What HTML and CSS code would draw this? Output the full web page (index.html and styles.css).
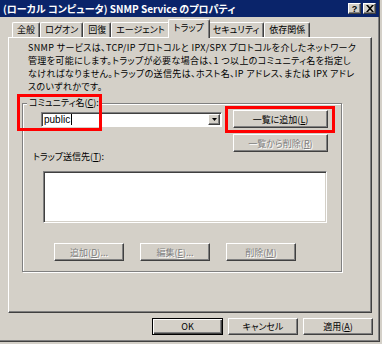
FILE: index.html
```html
<!DOCTYPE html>
<html lang="ja">
<head>
  <meta charset="UTF-8">
  <title>SNMP Service のプロパティ</title>
  <link rel="stylesheet" href="styles.css">
</head>
<body>

  <div class="window">
    <div class="titlebar">
      <span class="title">(ローカル コンピュータ) SNMP Service のプロパティ</span>
      <div class="title-buttons">
        <span class="tbtn">?</span>
        <span class="tbtn">
          <svg width="8" height="7" viewBox="0 0 8 7"><path d="M0 0h2l2 2.2L6 0h2L5 3.5 8 7H6L4 4.8 2 7H0l3-3.5z"/></svg>
        </span>
      </div>
    </div>

    <div class="tabs">
      <div class="tab">全般</div>
      <div class="tab">ログオン</div>
      <div class="tab">回復</div>
      <div class="tab">エージェント</div>
      <div class="tab active">トラップ</div>
      <div class="tab">セキュリティ</div>
      <div class="tab">依存関係</div>
    </div>

    <div class="panel">
      <p class="desc">
        SNMP サービスは、TCP/IP プロトコルと IPX/SPX プロトコルを介したネットワーク<br>
        管理を可能にします。トラップが必要な場合は、1 つ以上のコミュニティ名を指定し<br>
        なければなりません。トラップの送信先は、ホスト名、IP アドレス、または IPX アドレ<br>
        スのいずれかです。
      </p>

      <fieldset class="group">
        <legend>コミュニティ名(<u>C</u>):</legend>

        <div class="community-row">
          <div class="combo">
            <span class="combo-text">public</span><span class="caret"></span>
            <span class="combo-arrow">
              <svg width="5" height="3" viewBox="0 0 5 3"><path d="M0 0h5L2.5 3z"/></svg>
            </span>
          </div>
          <div class="side-buttons">
            <button class="btn">一覧に追加(<u>L</u>)</button>
            <button class="btn" disabled>一覧から削除(<u>R</u>)</button>
          </div>
        </div>

        <div class="field-label">トラップ送信先(<u>T</u>):</div>
        <div class="listbox"></div>

        <div class="btn-row">
          <button class="btn" disabled>追加(<u>D</u>)...</button>
          <button class="btn" disabled>編集(<u>E</u>)...</button>
          <button class="btn" disabled>削除(<u>M</u>)</button>
        </div>
      </fieldset>
    </div>

    <div class="footer">
      <button class="btn default">OK</button>
      <button class="btn">キャンセル</button>
      <button class="btn">適用(<u>A</u>)</button>
    </div>

    <!-- 注目枠 -->
    <div class="highlight hl-community"></div>
    <div class="highlight hl-add"></div>
  </div>

</body>
</html>
```

FILE: styles.css
```css
* {
  box-sizing: border-box;
}

body {
  margin: 0;
  background-color: #d4d0c8;
  font-family: "Noto Sans CJK JP", "Noto Sans", sans-serif;
  font-size: 9px;
  font-feature-settings: "palt" 1;
  color: #000;
}

.window {
  position: relative;
  width: 380px;
  height: 342px;
  background-color: #d4d0c8;
  box-shadow: inset -1px -1px #404040, inset -2px -2px #808080;
}

/* タイトルバー */
.titlebar {
  display: flex;
  align-items: center;
  justify-content: space-between;
  height: 17px;
  margin-right: 1px;
  padding: 0 3px 0 3px;
  background-color: #0a246a;
  color: #fff;
}

.title {
  font-size: 10px;
  font-weight: bold;
  white-space: nowrap;
}

.title-buttons {
  display: flex;
  gap: 2px;
}

.tbtn {
  display: flex;
  align-items: center;
  justify-content: center;
  width: 13px;
  height: 11px;
  background-color: #d4d0c8;
  color: #000;
  font-family: "Liberation Sans", sans-serif;
  font-size: 9px;
  font-weight: bold;
  border: 1px solid;
  border-color: #fff #404040 #404040 #fff;
  box-shadow: inset -1px -1px #808080;
}

/* タブ */
.tabs {
  display: flex;
  align-items: flex-end;
  height: 18px;
  margin-top: 2px;
  padding-left: 12px;
}

.tab {
  height: 15px;
  padding: 0 4px;
  line-height: 14px;
  white-space: nowrap;
  border: 1px solid;
  border-color: #fff #404040 transparent #fff;
  border-bottom: none;
  border-radius: 2px 2px 0 0;
  box-shadow: inset -1px 0 #808080;
}

.tab.active {
  position: relative;
  z-index: 1;
  height: 19px;
  margin: 0 -2px -1px;
  padding: 0 5px;
  line-height: 16px;
  background-color: #d4d0c8;
}

/* パネル */
.panel {
  height: 276px;
  margin: 0 8px;
  padding: 3px 0 0 19px;
  border: 1px solid;
  border-color: #fff #404040 #404040 #fff;
  box-shadow: inset -1px -1px #808080;
}

.desc {
  margin: 0;
  font-size: 9px;
  letter-spacing: 0.35px;
  line-height: 13px;
  white-space: nowrap;
}

.group {
  width: 320px;
  margin: 4px 0 0 -6px;
  padding: 1px 0 10px 0;
  border: 1px solid #808080;
  box-shadow: inset 1px 1px #fff, 1px 1px #fff;
}

.group legend {
  margin-left: 4px;
  padding: 0 2px;
  line-height: 12px;
  background-color: #d4d0c8;
}

.community-row {
  display: flex;
  align-items: flex-start;
  gap: 11px;
  margin-left: 18px;
}

.combo {
  display: flex;
  align-items: center;
  width: 181px;
  height: 15px;
  margin-top: 2px;
  padding-left: 2px;
  background-color: #fff;
  border: 1px solid;
  border-color: #808080 #fff #fff #808080;
  box-shadow: inset 1px 1px #404040;
  font-family: "Liberation Sans", sans-serif;
  font-size: 10px;
}

.caret {
  width: 1px;
  height: 11px;
  margin-left: 1px;
  background-color: #000;
}

.combo-arrow {
  display: flex;
  align-items: center;
  justify-content: center;
  width: 12px;
  height: 11px;
  margin-left: auto;
  margin-right: 1px;
  background-color: #d4d0c8;
  border: 1px solid;
  border-color: #fff #404040 #404040 #fff;
  box-shadow: inset -1px -1px #808080;
}

.side-buttons {
  display: flex;
  flex-direction: column;
  gap: 6px;
}

.side-buttons .btn {
  width: 95px;
}

.field-label {
  margin-left: 10px;
  line-height: 10px;
}

.listbox {
  width: 284px;
  height: 52px;
  margin: 9px 0 0 20px;
  background-color: #fff;
  border: 1px solid;
  border-color: #808080 #fff #fff #808080;
  box-shadow: inset 1px 1px #404040, inset -1px -1px #d4d0c8;
}

.btn-row {
  display: flex;
  gap: 16px;
  margin: 20px 0 0 31px;
}

/* ボタン */
.btn {
  width: 70px;
  height: 18px;
  padding: 0;
  font-family: inherit;
  font-size: 9px;
  font-feature-settings: "palt" 1;
  color: #000;
  background-color: #d4d0c8;
  border: 1px solid;
  border-color: #fff #404040 #404040 #fff;
  box-shadow: inset -1px -1px #808080;
}

.btn:disabled {
  color: #808080;
  text-shadow: 1px 1px #fff;
}

.btn.default {
  width: 71px;
  border-color: #000;
  box-shadow: inset 1px 1px #fff, inset -1px -1px #404040, inset -2px -2px #808080;
}

.footer {
  display: flex;
  justify-content: flex-end;
  gap: 5px;
  margin-top: 5px;
  padding-right: 7px;
}

.footer .btn {
  height: 17px;
}

/* 赤い注目枠 */
.highlight {
  position: absolute;
  border: 3px solid #f00;
}

.hl-community {
  left: 17px;
  top: 94px;
  width: 85px;
  height: 37px;
}

.hl-add {
  left: 225px;
  top: 106px;
  width: 110px;
  height: 27px;
}
```
